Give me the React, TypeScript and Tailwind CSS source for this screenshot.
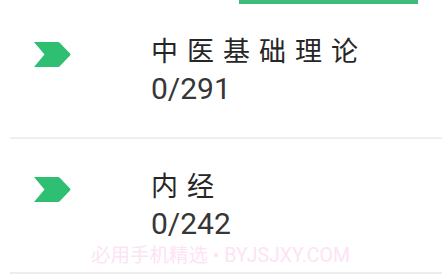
import React from "react";

function Chevron() {
  return (
    <svg width="38" height="27" viewBox="0 0 38 27" className="shrink-0">
      <path
        d="M1 1 L25 1 Q26 1 27 2 L37 12.5 Q38 13.5 37 14.5 L27 25 Q26 26 25 26 L1 26 L11.5 13.5 Z"
        fill="#2ebf72"
      />
    </svg>
  );
}

function Row({ title, count }: { title: string; count: string }) {
  return (
    <div className="flex h-[133px] items-start">
      <div className="ml-[33px] mt-[37px]">
        <Chevron />
      </div>
      <div className="ml-[80px] flex flex-col pt-[33px]">
        <div className="text-[27px] font-normal leading-[31px] tracking-[9px] text-[#262626]">
          {title}
        </div>
        <div className="mt-[3px] text-[30px] leading-[36px] text-[#363636]">
          {count}
        </div>
      </div>
    </div>
  );
}

export default function App() {
  return (
    <div className="relative h-[278px] w-[442px] overflow-hidden bg-white font-['Roboto','Noto_Sans_CJK_SC',sans-serif]">
      <div className="ml-[239px] h-[4px] w-[179px] bg-[#3fba79]" />
      <Row title="中医基础理论" count="0/291" />
      <div className="ml-[10px] h-[2px] bg-[#efefef]" />
      <Row title="内经" count="0/242" />
      <div className="ml-[10px] h-[2px] bg-[#ededed]" />
      <div className="pointer-events-none absolute left-[91px] top-[243px] whitespace-nowrap text-[19.5px] leading-[26px] text-[#fce4f4]">
        必用手机精选 • BYJSJXY.COM
      </div>
    </div>
  );
}
